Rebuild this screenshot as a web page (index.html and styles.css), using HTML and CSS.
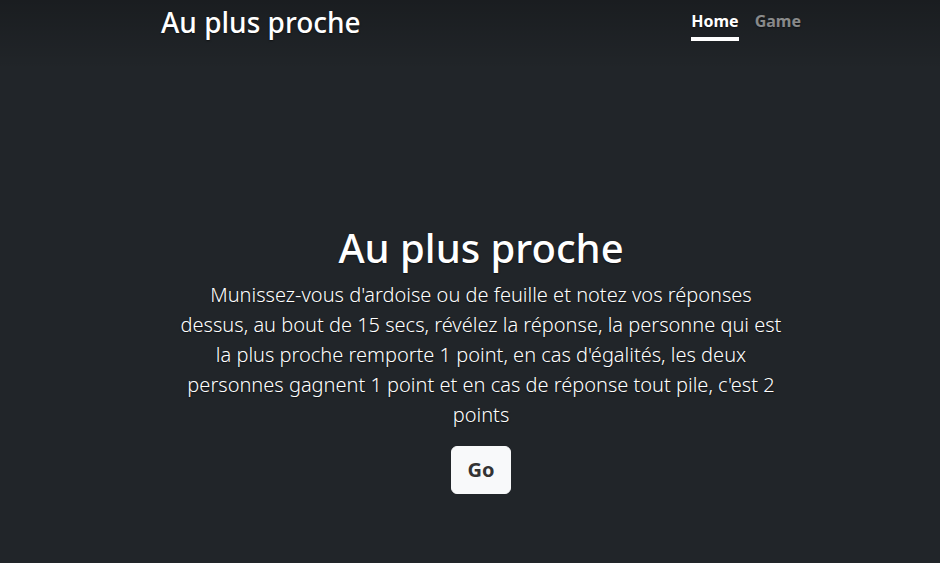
FILE: index.html
```html
<!DOCTYPE html>
<html lang="fr">
<head>
<meta charset="utf-8">
<title>Au plus proche</title>
<link rel="stylesheet" href="styles.css">
</head>
<body>
<div class="page">
  <div class="cover">
    <header class="header">
      <h3 class="brand">Au plus proche</h3>
      <nav class="nav">
        <a class="nav-link active" href="#">Home</a>
        <a class="nav-link" href="#">Game</a>
      </nav>
    </header>
    <main class="main">
      <h1 class="title">Au plus proche</h1>
      <p class="lead">Munissez-vous d'ardoise ou de feuille et notez vos réponses dessus, au bout de 15 secs, révélez la réponse, la personne qui est la plus proche remporte 1 point, en cas d'égalités, les deux personnes gagnent 1 point et en cas de réponse tout pile, c'est 2 points</p>
      <a class="btn" href="#">Go</a>
    </main>
  </div>
</div>
</body>
</html>
```
FILE: styles.css
```css
html, body {
  margin: 0;
  height: 100%;
}
body {
  background: #212529;
  color: #fff;
  font-family: "Noto Sans", "Open Sans", sans-serif;
  text-shadow: 0 0.05rem 0.1rem rgba(0, 0, 0, 0.5);
}
.page {
  min-height: 100%;
  box-sizing: border-box;
  padding: 6px 0 0 22px;
  background-image: linear-gradient(to bottom, rgba(0, 0, 0, 0.22), rgba(0, 0, 0, 0) 70px);
}
.cover {
  max-width: 640px;
  margin: 0 auto;
  text-align: center;
}
.header {
  display: flex;
  justify-content: space-between;
  align-items: flex-start;
}
.brand {
  margin: 0;
  font-size: 28px;
  font-weight: 500;
  line-height: 1.2;
}
.nav {
  display: flex;
  margin-top: -1px;
}
.nav-link {
  margin-left: 16px;
  padding: 4px 0;
  font-size: 16px;
  line-height: 24px;
  font-weight: 700;
  color: rgba(255, 255, 255, 0.5);
  text-decoration: none;
  border-bottom: 4px solid transparent;
}
.nav-link.active {
  color: #fff;
  border-bottom-color: #fff;
}
.main {
  margin-top: 183px;
}
.title {
  margin: 0 0 8px;
  font-size: 40px;
  font-weight: 500;
  line-height: 1.2;
}
.lead {
  margin: 0 auto 16px;
  max-width: 608px;
  font-size: 20px;
  font-weight: 300;
  line-height: 1.5;
}
.btn {
  display: inline-block;
  padding: 8px 16px;
  font-size: 20px;
  line-height: 1.5;
  font-weight: 700;
  color: #333;
  background: #f8f9fa;
  border: 1px solid #f8f9fa;
  border-radius: 6px;
  text-decoration: none;
  text-shadow: none;
}
```
